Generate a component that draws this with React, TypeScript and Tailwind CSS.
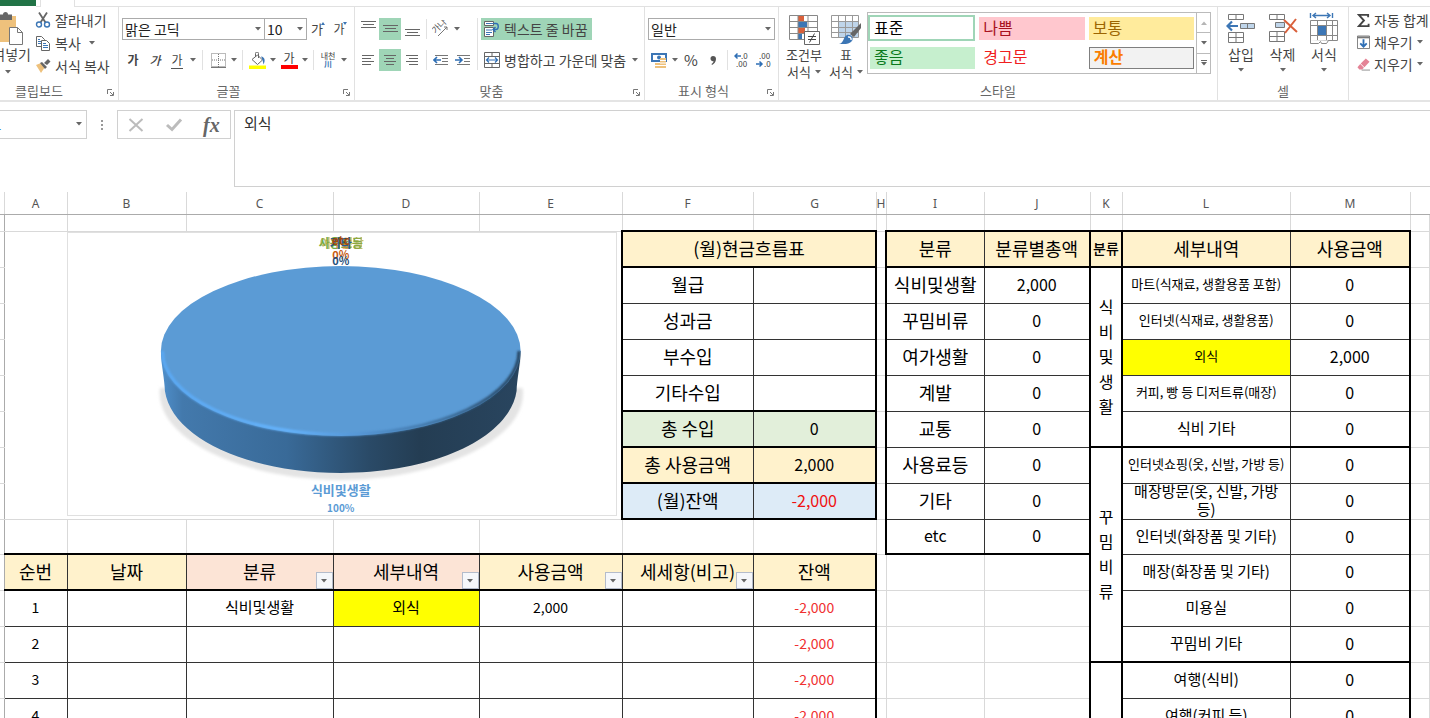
import React from "react";

const FONT = "font-['Noto_Sans_CJK_KR','Noto_Sans',sans-serif]";

const COLS = ["A", "B", "C", "D", "E", "F", "G", "H", "I", "J", "K", "L", "M"];

const CASH = [
    { name: "월급", value: "", row: "border-b border-b-[#333]" },
    { name: "성과금", value: "", row: "border-b border-b-[#333]" },
    { name: "부수입", value: "", row: "border-b border-b-[#333]" },
    { name: "기타수입", value: "", row: "border-b-2 border-b-black" },
    { name: "총 수입", value: "0", row: "border-b-2 border-b-black bg-[#e2efda]" },
    { name: "총 사용금액", value: "2,000", row: "border-b-2 border-b-black bg-[#fff2cc]" },
    { name: "(월)잔액", value: "-2,000", row: "border-b-2 border-b-black bg-[#ddebf7]" },
];

const CATEGORIES = [
    { name: "식비및생활", total: "2,000" },
    { name: "꾸밈비류", total: "0" },
    { name: "여가생활", total: "0" },
    { name: "계발", total: "0" },
    { name: "교통", total: "0" },
    { name: "사용료등", total: "0" },
    { name: "기타", total: "0" },
    { name: "etc", total: "0" },
];

const DETAILS = [
    { name: "마트(식재료, 생활용품 포함)", value: "0", text: "text-[13px]", group: "식비및생활", span: 5 },
    { name: "인터넷(식재료, 생활용품)", value: "0", text: "text-[13px]" },
    { name: "외식", value: "2,000", text: "text-[13px] bg-[#ffff00]" },
    { name: "커피, 빵 등 디저트류(매장)", value: "0", text: "text-[13px]" },
    { name: "식비 기타", value: "0", text: "text-[15px]", last: true },
    { name: "인터넷쇼핑(옷, 신발, 가방 등)", value: "0", text: "text-[13px]", group: "꾸밈비류", span: 6 },
    { name: "매장방문(옷, 신발, 가방 등)", value: "0", text: "text-[15px]" },
    { name: "인터넷(화장품 및 기타)", value: "0", text: "text-[15px]" },
    { name: "매장(화장품 및 기타)", value: "0", text: "text-[15px]" },
    { name: "미용실", value: "0", text: "text-[15px]" },
    { name: "꾸밈비 기타", value: "0", text: "text-[15px]", last: true },
    { name: "여행(식비)", value: "0", text: "text-[15px]", group: "여가생활", span: 7 },
    { name: "여행(커피 등)", value: "0", text: "text-[15px]" },
    { name: "여행(숙박)", value: "0", text: "text-[15px]" },
    { name: "여행(교통)", value: "0", text: "text-[15px]" },
    { name: "영화", value: "0", text: "text-[15px]" },
    { name: "취미", value: "0", text: "text-[15px]" },
    { name: "여가 기타", value: "0", text: "text-[15px]", last: true },
];

const LOG_HEAD = [
    { name: "순번", filter: false, bg: "bg-[#fff2cc]" },
    { name: "날짜", filter: false, bg: "bg-[#fff2cc]" },
    { name: "분류", filter: true, bg: "bg-[#fce4d6]" },
    { name: "세부내역", filter: true, bg: "bg-[#fce4d6]" },
    { name: "사용금액", filter: true, bg: "bg-[#fff2cc]" },
    { name: "세세항(비고)", filter: true, bg: "bg-[#fff2cc]" },
    { name: "잔액", filter: false, bg: "bg-[#fff2cc]" },
];

function Caret({ light = false }: { light?: boolean }) {
    return (
        <svg width="6" height="4" viewBox="0 0 6 4" className="shrink-0">
            <path d="M0 0h6L3 3.5z" fill={light ? "#b5b5b5" : "#666"} />
        </svg>
    );
}

function CaretButton({ label }: { label: string }) {
    return (
        <button aria-label={label} className="flex h-[22px] w-[10px] shrink-0 items-center justify-center">
            <Caret />
        </button>
    );
}

function Sep() {
    return <div className="h-5 w-px shrink-0 bg-[#e1e1e1]" />;
}

function Group({ label, width, launcher = false, children }: { label: string; width: string; launcher?: boolean; children: React.ReactNode }) {
    return (
        <section className={"flex h-[93px] flex-col " + width}>
            <div className="flex min-h-0 flex-1 border-r border-[#e1e1e1]">{children}</div>
            <div className="relative flex h-[19px] items-center justify-center border-r border-[#e1e1e1] text-[13px] leading-4 text-[#666]">
                {label}
                {launcher && (
                    <button aria-label={label + " 설정"} className="absolute right-1 bottom-1">
                        <svg width="7" height="7" viewBox="0 0 7 7" fill="none" stroke="#777">
                            <path d="M.5 5V.5H5M3 3l3 3M6.5 3v3.5H3" />
                        </svg>
                    </button>
                )}
            </div>
        </section>
    );
}

function Lines({ rows }: { rows: number[][] }) {
    return (
        <svg width="16" height="16" viewBox="0 0 16 16" stroke="#666">
            {rows.map((r, i) => (
                <path key={i} d={`M${r[0]} ${r[2]}H${r[1]}`} />
            ))}
        </svg>
    );
}

function IconButton({ label, on = false, children }: { label: string; on?: boolean; children: React.ReactNode }) {
    return (
        <button aria-label={label} className={"flex h-[22px] w-[22px] shrink-0 items-center justify-center text-[13px] leading-4 " + (on ? "bg-[#9fd5b7]" : "")}>
            {children}
        </button>
    );
}

function Clipboard() {
    return (
        <Group label="클립보드" width="w-[119px] shrink-0 [&>div:last-child]:pr-10" launcher>
            <button className="flex w-[31px] shrink-0 flex-col items-end overflow-hidden pt-[5px]">
                <svg width="31" height="34" viewBox="0 0 31 34" className="shrink-0">
                    <path d="M-13 4h29v26H-13z" fill="#eec17c" />
                    <path d="M-1 2.500h4a2.500 2.500 0 0 1 5 0h4V8H-1z" fill="#666" />
                    <path d="M9.500 15.500h8l5 5v12h-13z" fill="#fff" stroke="#777" />
                    <path d="M17.500 15.500v5h5" fill="none" stroke="#777" />
                </svg>
                <span className="text-[14px] leading-4 whitespace-nowrap">붙여넣기</span>
                <span className="mt-2 pr-5"><Caret /></span>
            </button>
            <div className="ml-1 flex flex-col gap-[3px] pt-[3px] text-[14px] leading-5 whitespace-nowrap">
                <button className="flex items-center gap-1">
                    <svg width="16" height="18" viewBox="0 0 16 18" fill="none">
                        <path d="M4 1.500l6.500 10M12 1.500l-6.500 10" stroke="#666" strokeWidth="1.800" />
                        <circle cx="4" cy="13.500" r="2.500" stroke="#3c76b5" strokeWidth="1.400" />
                        <circle cx="12" cy="13.500" r="2.500" stroke="#3c76b5" strokeWidth="1.400" />
                    </svg>
                    잘라내기
                </button>
                <button className="flex items-center gap-1">
                    <svg width="16" height="16" viewBox="0 0 16 16" fill="#fff" stroke="#666">
                        <path d="M1.500 1.500h5l3 3v7h-8z" />
                        <path d="M6.500 5.500h5l3 3v7h-8z" />
                        <path d="M3 4.500h2M3 6.500h3M3 8.500h3M8 8.500h3M8 10.500h5M8 12.500h5" stroke="#3c76b5" />
                    </svg>
                    복사
                    <span className="ml-1 flex"><Caret /></span>
                </button>
                <button className="flex items-center gap-1">
                    <svg width="16" height="14" viewBox="0 0 16 14">
                        <path d="M1 6l5-2 4 4-4 6z" fill="#eec17c" />
                        <path d="M5 4l2-1 5 5-2 2zM9 4l4-4 2.500 2.500L12 6z" fill="#666" />
                    </svg>
                    서식 복사
                </button>
            </div>
        </Group>
    );
}

function FontGroup() {
    return (
        <Group label="글꼴" width="w-[236px] shrink-0 [&>div:last-child]:pr-4" launcher>
            <div className="flex flex-col gap-[9px] pt-[11px] pl-[3px]">
                <div className="flex items-center">
                    <div className="relative">
                        <select aria-label="글꼴" className="block h-[22px] w-[143px] appearance-none border border-[#ababab] bg-white px-0.5 pb-0.5 text-[14px] leading-5 text-[#222]">
                            <option>맑은 고딕</option>
                        </select>
                        <span className="pointer-events-none absolute top-[9px] right-1 flex"><Caret /></span>
                    </div>
                    <div className="relative -ml-px">
                        <select aria-label="글꼴 크기" className="block h-[22px] w-[43px] appearance-none border border-[#ababab] bg-white px-0.5 pb-0.5 text-[14px] leading-5 text-[#222]">
                            <option>10</option>
                        </select>
                        <span className="pointer-events-none absolute top-[9px] right-1 flex"><Caret /></span>
                    </div>
                    <IconButton label="글꼴 크기 크게">
                        가
                        <svg width="4" height="3" viewBox="0 0 4 3" className="mt-1 -ml-0.5 self-start"><path d="M0 3h4L2 0z" fill="#3c76b5" /></svg>
                    </IconButton>
                    <IconButton label="글꼴 크기 작게">
                        <span className="text-[12px]">가</span>
                        <svg width="4" height="3" viewBox="0 0 4 3" className="mt-1 -ml-0.5 self-start"><path d="M0 0h4L2 3z" fill="#3c76b5" /></svg>
                    </IconButton>
                </div>
                <div className="flex items-center">
                    <IconButton label="굵게"><span className="text-[12px] font-bold">가</span></IconButton>
                    <IconButton label="기울임꼴"><span className="text-[12px] font-medium italic">가</span></IconButton>
                    <IconButton label="밑줄"><span className="border-b border-[#555] text-[12px]">가</span></IconButton>
                    <CaretButton label="밑줄 종류" />
                    <div className="mx-1"><Sep /></div>
                    <IconButton label="테두리">
                        <svg width="15" height="15" viewBox="0 0 15 15" stroke="#777" fill="none">
                            <path d="M.5.5h14v13H.5zM7.500 1v13M1 7h13" strokeDasharray="1 1" />
                            <path d="M0 14.500h15" />
                        </svg>
                    </IconButton>
                    <CaretButton label="테두리 종류" />
                    <div className="mx-[3px]"><Sep /></div>
                    <IconButton label="채우기 색">
                        <svg width="17" height="17" viewBox="0 0 17 17" fill="none">
                            <path d="M3 7.500L8.500 3l5 5-5 4.500z" fill="#fff" stroke="#666" />
                            <path d="M6.500 5V1.500a1.500 1.500 0 0 1 3 0V6" stroke="#666" />
                            <path d="M12 4.500c4 .5 4.500 4 2.500 8-.5-3-1-5-2.500-8z" fill="#3c76b5" />
                            <path d="M0 13.500h17V17H0z" fill="#ff0" />
                        </svg>
                    </IconButton>
                    <CaretButton label="채우기 색 선택" />
                    <IconButton label="글꼴 색">
                        <span className="w-[17px] border-b-4 border-[#ff0000] text-[12px] leading-[14px]">가</span>
                    </IconButton>
                    <CaretButton label="글꼴 색 선택" />
                    <div className="mx-[3px]"><Sep /></div>
                    <IconButton label="윗주 필드 표시">
                        <span className="flex flex-col items-center text-[8px] leading-[8px]">
                            <span>내천</span>
                            <span className="font-bold text-[#3c76b5]">川</span>
                        </span>
                    </IconButton>
                    <CaretButton label="윗주 옵션" />
                </div>
            </div>
        </Group>
    );
}

function AlignGroup() {
    return (
        <Group label="맞춤" width="w-[290px] shrink-0 [&>div:last-child]:pr-4" launcher>
            <div className="flex pt-[11px] pl-[2px]">
                <div className="flex flex-col gap-[9px]">
                    <div className="flex items-center">
                        <IconButton label="위쪽 맞춤"><Lines rows={[[1, 16, 0.5], [3, 14, 3.5], [1, 16, 6.5]]} /></IconButton>
                        <IconButton label="가운데 맞춤" on><Lines rows={[[1, 16, 4.5], [3, 14, 7.5], [1, 16, 10.5]]} /></IconButton>
                        <IconButton label="아래쪽 맞춤"><Lines rows={[[1, 16, 8.5], [3, 14, 11.5], [1, 16, 14.5]]} /></IconButton>
                        <div className="mx-[3px]"><Sep /></div>
                        <IconButton label="방향">
                            <svg width="18" height="18" viewBox="0 0 18 18">
                                <text x="0" y="10" fontSize="9" fill="#555" transform="rotate(-45 7 8)">가나</text>
                                <path d="M6 16l9-9M15 7v3M15 7h-3" stroke="#777" fill="none" />
                            </svg>
                        </IconButton>
                        <CaretButton label="방향 선택" />
                    </div>
                    <div className="flex items-center">
                        <IconButton label="왼쪽 맞춤"><Lines rows={[[2, 14, 3.5], [2, 11, 6.5], [2, 14, 9.5], [2, 11, 12.5]]} /></IconButton>
                        <IconButton label="가로 가운데" on><Lines rows={[[2, 14, 3.5], [4, 12, 6.5], [2, 14, 9.5], [4, 12, 12.5]]} /></IconButton>
                        <IconButton label="오른쪽 맞춤"><Lines rows={[[2, 14, 3.5], [5, 14, 6.5], [2, 14, 9.5], [5, 14, 12.5]]} /></IconButton>
                        <div className="mx-[3px]"><Sep /></div>
                        <IconButton label="내어쓰기">
                            <svg width="16" height="12" viewBox="0 0 16 12" fill="none">
                                <path d="M2 1.500h13M9 4.500h6M9 7.500h6M2 10.500h13" stroke="#777" />
                                <path d="M1 6h7M4 3L1 6l3 3" stroke="#2f6fb5" strokeWidth="1.600" />
                            </svg>
                        </IconButton>
                        <IconButton label="들여쓰기">
                            <svg width="16" height="12" viewBox="0 0 16 12" fill="none">
                                <path d="M2 1.500h13M9 4.500h6M9 7.500h6M2 10.500h13" stroke="#777" />
                                <path d="M0 6h7M4 3l3 3-3 3" stroke="#2f6fb5" strokeWidth="1.600" />
                            </svg>
                        </IconButton>
                    </div>
                </div>
                <div className="mx-[3px] h-[52px] w-px bg-[#e1e1e1]" />
                <div className="flex flex-col items-start gap-[9px] text-[14px] leading-[18px] whitespace-nowrap">
                    <button className="flex h-[22px] items-center gap-1 bg-[#9fd5b7] pr-1 pl-[3px]">
                        <svg width="16" height="17" viewBox="0 0 16 17" fill="none">
                            <path d="M.5.5h9v4h-9zM.5 6.500h9v9h-9z" fill="#fff" stroke="#666" />
                            <path d="M2 2.500h8M2 9h6M2 11.500h6M2 13.500h4" stroke="#3c76b5" />
                            <path d="M10 2.500h2c3 0 3 6 0 6H9M11.500 6L9 8.500l2.500 2.500" stroke="#2f6fb5" strokeWidth="1.400" />
                        </svg>
                        텍스트 줄 바꿈
                    </button>
                    <div className="flex items-center">
                        <button className="flex h-[22px] items-center gap-1 pl-[3px]">
                            <svg width="16" height="16" viewBox="0 0 16 16" fill="none">
                                <path d="M.5.5h15v15H.5zM.5 4.500h15M.5 11.500h15M8 .5v4M8 11.500v4" stroke="#666" />
                                <path d="M2 8h12M5 5.500L2.500 8 5 10.500M11 5.500L13.500 8 11 10.500" stroke="#2f6fb5" strokeWidth="1.200" />
                            </svg>
                            병합하고 가운데 맞춤
                        </button>
                        <span className="ml-1 flex"><CaretButton label="병합 옵션" /></span>
                    </div>
                </div>
            </div>
        </Group>
    );
}

function NumberGroup() {
    return (
        <Group label="표시 형식" width="w-[134px] shrink-0 [&>div:last-child]:pr-4" launcher>
            <div className="flex flex-col gap-[9px] pt-[11px] pl-[3px]">
                <div className="relative">
                    <select aria-label="표시 형식" className="block h-[22px] w-[127px] appearance-none border border-[#ababab] bg-white px-0.5 pb-0.5 text-[14px] leading-5 text-[#222]">
                        <option>일반</option>
                    </select>
                    <span className="pointer-events-none absolute top-[9px] right-1 flex"><Caret /></span>
                </div>
                <div className="flex items-center">
                    <IconButton label="회계 표시 형식">
                        <svg width="17" height="17" viewBox="0 0 17 17">
                            <path d="M0 1h16v9H0z" fill="#3c76b5" />
                            <path d="M2 3h12v5H2z" fill="#fff" />
                            <circle cx="8" cy="5.500" r="2" fill="#3c76b5" />
                            <path d="M9 6h6v10H9zM4 11h6v5H4z" fill="#eec17c" />
                            <path d="M9 8.500h6M9 11h6M4 13.500h11" stroke="#fff" />
                        </svg>
                    </IconButton>
                    <CaretButton label="통화 선택" />
                    <IconButton label="백분율"><span className="text-[15px]">%</span></IconButton>
                    <IconButton label="쉼표 스타일">
                        <svg width="6" height="9" viewBox="0 0 6 9"><path d="M3 0c2 0 3 1.200 3 3 0 3-2 5-4 6l-.5-1C3 7 3.500 6 3.500 5.200 1.500 5.500.5 4 .5 2.600.5 1 1.500 0 3 0z" fill="#555" /></svg>
                    </IconButton>
                    <div className="mx-[3px]"><Sep /></div>
                    <IconButton label="자릿수 늘림">
                        <svg width="16" height="16" viewBox="0 0 16 16" fontSize="8" fill="#444">
                            <text x="7" y="7">.0</text>
                            <text x="2" y="15">.00</text>
                            <path d="M1 4h6M3.500 1.500L1 4l2.500 2.500" fill="none" stroke="#2f6fb5" strokeWidth="1.500" />
                        </svg>
                    </IconButton>
                    <IconButton label="자릿수 줄임">
                        <svg width="16" height="16" viewBox="0 0 16 16" fontSize="8" fill="#444">
                            <text x="3" y="7">.00</text>
                            <text x="8" y="15">.0</text>
                            <path d="M0 12h6M3.500 9.500L6 12l-2.500 2.500" fill="none" stroke="#2f6fb5" strokeWidth="1.500" />
                        </svg>
                    </IconButton>
                </div>
            </div>
        </Group>
    );
}

function StyleGroup() {
    return (
        <Group label="스타일" width="w-[439px] shrink-0">
            <div className="flex pl-1 text-[13px] leading-4">
                <button className="flex w-[42px] flex-col items-center pt-[7px]">
                    <svg width="32" height="31" viewBox="0 0 32 31">
                        <path d="M1.500 1.500h28v24h-28z" fill="#fff" />
                        <path d="M10 2h6v5h-6zM10 14h7v5h-7z" fill="#d9603b" />
                        <path d="M10 8h9v5h-9zM10 20h4v5h-4z" fill="#3c76b5" />
                        <path d="M1.500 1.500h28v24h-28zM1.500 7.500h28M1.500 13.500h28M1.500 19.500h28M10 1.500v24M20 1.500v24" fill="none" stroke="#888" />
                        <path d="M16.500 17.500h15v13h-15z" fill="#fff" stroke="#666" />
                        <path d="M20 22.500h8M20 25.500h8M26.500 19.500l-5 9" stroke="#444" />
                    </svg>
                    <span className="mt-0.5">조건부</span>
                    <span className="mt-px flex items-center gap-1 whitespace-nowrap">서식 <Caret /></span>
                </button>
                <button className="flex w-[42px] flex-col items-center pt-[7px]">
                    <svg width="32" height="31" viewBox="0 0 32 31">
                        <path d="M1.500 1.500h27v22h-27z" fill="#fff" />
                        <path d="M8 7h20v17H8z" fill="#bfd5ea" />
                        <path d="M1.500 1.500h27v22h-27zM1.500 7.500h27M1.500 13.500h27M1.500 18.500h27M8.500 1.500v22M15.500 1.500v22M22.500 1.500v22" fill="none" stroke="#999" />
                        <path d="M31 9v5l-7 9-4-3z" fill="#666" />
                        <path d="M9 30c5-1 4-7 8-9 4-1 7 3 5 6-3 4-9 3-13 3z" fill="#3c76b5" />
                        <path d="M18 23c2-.5 3.500 1 3 3" stroke="#fff" fill="none" strokeWidth="1.500" />
                    </svg>
                    <span className="mt-0.5">표</span>
                    <span className="mt-px flex items-center gap-1 whitespace-nowrap">서식 <Caret /></span>
                </button>
                <div className="mt-[5px] flex h-[62px] w-[344px] border border-[#bbb] bg-white text-[16px] leading-[16px]">
                    <div className="grid flex-1 grid-cols-3 gap-x-1 gap-y-1 p-[2px] text-left">
                        <button className="-ml-0.5 h-[26px] border-2 border-[#9fd5b7] px-1 pb-0.5 text-left text-black">표준</button>
                        <button className="mt-0.5 h-[23px] bg-[#ffc7ce] px-1 pb-1 text-left text-[#a8121f]">나쁨</button>
                        <button className="mt-0.5 h-[23px] bg-[#ffeb9c] px-1 pb-1 text-left text-[#9c6500]">보통</button>
                        <button className="h-[22px] bg-[#c6efce] px-1 pb-1 text-left text-[#0a7a1c]">좋음</button>
                        <button className="h-[22px] px-1 pb-1 text-left text-[#f02020]">경고문</button>
                        <button className="h-[22px] border border-[#7f7f7f] bg-[#f2f2f2] px-1 pb-1 text-left font-bold text-[#fa7d00]">계산</button>
                    </div>
                    <div className="flex w-[14px] flex-col divide-y divide-[#bbb] border-l border-[#bbb]">
                        <button aria-label="위로" className="flex flex-1 items-center justify-center"><span className="flex rotate-180"><Caret light /></span></button>
                        <button aria-label="아래로" className="flex flex-1 items-center justify-center"><Caret /></button>
                        <button aria-label="자세히" className="flex flex-1 flex-col items-center justify-center gap-px">
                            <span className="h-px w-1.5 bg-[#666]" />
                            <Caret />
                        </button>
                    </div>
                </div>
            </div>
        </Group>
    );
}

function CellsGroup() {
    return (
        <Group label="셀" width="w-[131px] shrink-0">
            <div className="flex pl-[2px] text-[14px] leading-5">
                <button className="flex w-[42px] flex-col items-center pt-[5px]">
                    <svg width="30" height="32" viewBox="0 0 30 32" fill="#fff" stroke="#777">
                        <path d="M2.500 2.500h15v5h-15zM10 2.500v5M2.500 20.500h15v10h-15zM10 20.500v10M2.500 25.500h15" />
                        <path d="M14.500 11.500h14v5h-14zM21.500 11.500v5" fill="#bfd5ea" />
                        <path d="M1 14h11M6 9.500L1.500 14 6 18.500" fill="none" stroke="#3c76b5" strokeWidth="2.200" />
                    </svg>
                    <span>삽입</span>
                    <span className="mt-1 flex"><Caret /></span>
                </button>
                <button className="flex w-[41px] flex-col items-center pt-[5px]">
                    <svg width="30" height="32" viewBox="0 0 30 32" fill="#fff" stroke="#777">
                        <path d="M1.500 2.500h15v5h-15zM9 2.500v5M1.500 19.500h15v10h-15zM9 19.500v10M1.500 24.500h15" />
                        <path d="M7.500 10.500h9v5h-9z" fill="#bfd5ea" />
                        <path d="M16 8l13 12M28 7L17 21" fill="none" stroke="#d9603b" strokeWidth="2" />
                    </svg>
                    <span>삭제</span>
                    <span className="mt-1 flex"><Caret /></span>
                </button>
                <button className="flex w-[42px] flex-col items-center pt-[5px]">
                    <svg width="30" height="32" viewBox="0 0 30 32" fill="#fff" stroke="#888">
                        <path d="M1.500 8.500h27v20h-27zM1.500 13.500h27M1.500 23.500h27M8.500 8.500v20M17.500 8.500v20M23.500 8.500v20" />
                        <path d="M1.500 28v3.500h8l2-2 1 2h5l2-3" />
                        <path d="M9 14h8v9H9z" fill="#3c76b5" stroke="none" />
                        <path d="M1.500 1v5M23.500 1v5M4 3.500h17M7 1L4 3.500 7 6M18 1l3 2.500L18 6" fill="none" stroke="#3c76b5" strokeWidth="1.400" />
                    </svg>
                    <span>서식</span>
                    <span className="mt-1 flex"><Caret /></span>
                </button>
            </div>
        </Group>
    );
}

function EditGroup() {
    return (
        <div className="flex min-w-0 flex-1 flex-col gap-[2px] overflow-hidden pt-[3px] pl-2 text-[14px] leading-5 whitespace-nowrap">
            <button className="flex items-center gap-1">
                <svg width="13" height="15" viewBox="0 0 14 15" className="shrink-0" fill="none" stroke="#444" strokeWidth="2">
                    <path d="M12 4V1.500H2L7.500 7.500 2 13.500h10.500V11" />
                </svg>
                자동 합계
            </button>
            <button className="flex items-center gap-1">
                <svg width="13" height="15" viewBox="0 0 14 15" className="shrink-0" fill="none">
                    <path d="M.5.5h13v13.500H.5z" stroke="#777" />
                    <path d="M.5 2h13" stroke="#777" strokeWidth="2" />
                    <path d="M7 4v8M3.500 8.500L7 12l3.500-3.500" stroke="#2f6fb5" strokeWidth="2" />
                </svg>
                채우기
                <Caret />
            </button>
            <button className="flex items-center gap-1">
                <svg width="13" height="15" viewBox="0 0 14 15" className="shrink-0">
                    <path d="M9.500 1L13.500 4.500 8 10.500 4 6.500z" fill="#e48396" />
                    <path d="M3.500 7L7.500 11 5.500 13H2.500L.5 10.500z" fill="#e48396" />
                    <path d="M5 13.500h9" stroke="#888" />
                </svg>
                지우기
                <Caret />
            </button>
        </div>
    );
}

function FormulaBar() {
    return (
        <div className="flex h-[85px] items-start pt-2">
            <div className="relative">
                <input aria-label="이름 상자" defaultValue="D11" className="block h-[29px] w-[87px] border border-l-0 border-[#d0d0d0] -indent-[22px] text-[13px] text-[#2b7cd3]" />
                <span className="pointer-events-none absolute top-3 right-[5px] flex"><Caret /></span>
            </div>
            <div className="flex h-[29px] w-[30px] flex-col items-center justify-center gap-[2px]">
                <span className="h-0.5 w-0.5 bg-[#999]" />
                <span className="h-0.5 w-0.5 bg-[#999]" />
                <span className="h-0.5 w-0.5 bg-[#999]" />
            </div>
            <div className="flex h-[29px] w-[114px] items-center justify-around border border-[#d0d0d0]">
                <button aria-label="취소">
                    <svg width="16" height="14" viewBox="0 0 16 14" fill="none" stroke="#bcbcbc" strokeWidth="2"><path d="M1.500 1l13 12M14.500 1l-13 12" /></svg>
                </button>
                <button aria-label="입력">
                    <svg width="18" height="14" viewBox="0 0 18 14" fill="none" stroke="#bcbcbc" strokeWidth="3"><path d="M2 7l5 4.500L16 1.500" /></svg>
                </button>
                <button aria-label="함수 삽입" className="font-['Liberation_Serif',serif] text-[20px] leading-6 font-bold text-[#666] italic">fx</button>
            </div>
            <textarea aria-label="수식 입력줄" defaultValue="외식" className="ml-[3px] h-[77px] min-w-0 flex-1 resize-none border border-r-0 border-[#d0d0d0] px-[9px] py-0 text-[15px] leading-6 text-[#333]" />
        </div>
    );
}

function Chart() {
    return (
        <div className="mr-1 ml-[62px] border border-[#e0e0e0] bg-white">
            <svg viewBox="0 0 549 282" className="block h-[282px] w-full" textAnchor="middle" fontWeight="bold">
                <defs>
                    <linearGradient id="side">
                        <stop offset="0" stopColor="#4f8fcb" />
                        <stop offset="0.06" stopColor="#4379ac" />
                        <stop offset="0.35" stopColor="#396a98" />
                        <stop offset="0.58" stopColor="#2a4a67" />
                        <stop offset="0.72" stopColor="#243d53" />
                        <stop offset="1" stopColor="#29455f" />
                    </linearGradient>
                    <linearGradient id="rim">
                        <stop offset="0" stopColor="#5aa9f5" />
                        <stop offset="0.35" stopColor="#66b5ff" />
                        <stop offset="0.55" stopColor="#5596d6" />
                        <stop offset="0.8" stopColor="#3a6a96" />
                        <stop offset="1" stopColor="#24415c" />
                    </linearGradient>
                    <filter id="shadow" x="-10%" y="-10%" width="120%" height="120%">
                        <feGaussianBlur stdDeviation="1.5" />
                    </filter>
                    <filter id="soft" x="-10%" y="-10%" width="120%" height="120%">
                        <feGaussianBlur stdDeviation="0.8" />
                    </filter>
                    <clipPath id="front">
                        <path d="M93 112H453V220H93z" />
                    </clipPath>
                </defs>
                <path d="M92 155C86 208 180 247 273 247S462 208 455 155z" fill="#e4e4e4" filter="url(#shadow)" />
                <path d="M93 118C93 130 97 148 97 158C104 205 180 240 273 240S442 205 449 158C449 148 453 130 453 118z" fill="url(#side)" />
                <ellipse cx="273" cy="118" rx="180" ry="85" fill="#5b9bd5" />
                <g clipPath="url(#front)">
                    <path d="M94.500 118A178.500 83.500 0 0 0 451.500 118" fill="none" stroke="url(#rim)" strokeWidth="3" filter="url(#soft)" />
                </g>
                <g fontSize="12">
                    <text x="273" y="15" fill="#70ad47">사용료등</text>
                    <text x="274" y="15" fill="#a5a53a" opacity="0.7">여가생활</text>
                    <text x="273" y="15" fill="#ed7d31" opacity="0.6">계발</text>
                    <text x="273" y="15" fill="#255e91">기타</text>
                    <text x="273" y="12" fill="#9e480e">etc</text>
                </g>
                <g fontSize="11">
                    <text x="273" y="26" fill="#c55a11">0%</text>
                    <text x="273" y="32" fill="#1f4e79">0%</text>
                </g>
                <text x="273" y="262" fontSize="13" fill="#5b9bd5">식비및생활</text>
                <text x="273" y="279" fontSize="10" fill="#5b9bd5">100%</text>
            </svg>
        </div>
    );
}

// one blank cell with the default grey gridlines
function Blank({ className = "border-r-[#d9d9d9]" }: { className?: string }) {
    return <td className={"border-r border-b border-b-[#d9d9d9] " + className} />;
}

function CashCells({ index }: { index: number }) {
    if (index === 0) {
        return <th colSpan={2} className="border-2 border-black bg-[#fff2cc] text-[18px] font-normal">(월)현금흐름표</th>;
    }
    const c = CASH[index - 1];
    return (
        <>
            <td className={"border-r border-l-2 border-r-[#333] border-l-black text-[18px] " + c.row}>{c.name}</td>
            <td className={"border-r-2 border-r-black " + c.row + (c.value.startsWith("-") ? " text-[#f01010]" : "")}>{c.value}</td>
        </>
    );
}

function LogCells({ index }: { index: number }) {
    if (index === 0) {
        return (
            <>
                {LOG_HEAD.map((h, i) => (
                    <th key={h.name} className={"relative border-y-2 border-y-black text-[18px] font-normal " + h.bg + (i === 6 ? " border-r-2 border-r-black" : " border-r border-r-[#333]")}>
                        {h.name}
                        {h.filter && (
                            <button aria-label={h.name + " 필터"} className="absolute right-0 bottom-0 flex h-[17px] w-[17px] items-center justify-center border border-[#b4bccb] bg-[#f5f7fa]">
                                <Caret />
                            </button>
                        )}
                    </th>
                ))}
            </>
        );
    }
    const first = index === 1;
    const cell = "border-r border-b border-[#333] ";
    return (
        <>
            <td className={cell + "text-[14px]"}>{index}</td>
            <td className={cell} />
            <td className={cell + "text-[15px]"}>{first && "식비및생활"}</td>
            <td className={cell + "text-[15px]" + (first ? " bg-[#ffff00]" : "")}>{first && "외식"}</td>
            <td className={cell + "text-[14px]"}>{first && "2,000"}</td>
            <td className={cell} />
            <td className="border-r-2 border-b border-r-black border-b-[#333] text-[14px] text-[#f03030]">-2,000</td>
        </>
    );
}

function CategoryCells({ index }: { index: number }) {
    if (index === 0) {
        return (
            <>
                <th className="border-y-2 border-r border-l-2 border-black border-r-[#333] bg-[#fff2cc] text-[18px] font-normal">분류</th>
                <th className="border-y-2 border-black bg-[#fff2cc] text-[18px] font-normal">분류별총액</th>
            </>
        );
    }
    const c = CATEGORIES[index - 1];
    if (!c) {
        return (
            <>
                <Blank />
                <Blank />
            </>
        );
    }
    const bottom = index === CATEGORIES.length ? "border-b-2 border-b-black " : "border-b border-b-[#333] ";
    return (
        <>
            <td className={bottom + "border-r border-l-2 border-r-[#333] border-l-black whitespace-nowrap " + (c.name === "etc" ? "text-[16px]" : "text-[18px]")}>{c.name}</td>
            <td className={bottom}>{c.total}</td>
        </>
    );
}

function DetailCells({ index }: { index: number }) {
    if (index === 0) {
        return (
            <>
                <th className="border-2 border-black bg-[#fff2cc] text-[14px] font-medium whitespace-nowrap">분류</th>
                <th className="border-y-2 border-r border-black border-r-[#333] bg-[#fff2cc] text-[18px] font-normal">세부내역</th>
                <th className="border-y-2 border-r-2 border-black bg-[#fff2cc] text-[18px] font-normal">사용금액</th>
            </>
        );
    }
    const d = DETAILS[index - 1];
    const bottom = d.last ? "border-b-2 border-b-black " : "border-b border-b-[#333] ";
    return (
        <>
            {d.group && (
                <td rowSpan={d.span} className="border-2 border-black leading-[25px]">
                    {d.group.split("").map((ch) => (
                        <div key={ch}>{ch}</div>
                    ))}
                </td>
            )}
            <td className={bottom + "border-r border-r-[#333] px-1 leading-[18px] " + d.text}>
                <div className="-my-1 flex h-[36px] items-center justify-center">{d.name}</div>
            </td>
            <td className={bottom + "border-r-2 border-r-black"}>{d.value}</td>
        </>
    );
}

function Sheet() {
    return (
        <table className="w-full table-fixed border-collapse text-center text-[16px] leading-6 text-black [&_tbody_td]:pb-[2px] [&_tbody_th]:pb-[2px]">
            <colgroup>
                <col className="w-[4px]" />
                <col className="w-[63px]" />
                <col className="w-[119px]" />
                <col className="w-[147px]" />
                <col className="w-[146px]" />
                <col className="w-[143px]" />
                <col className="w-[131px]" />
                <col className="w-[123px]" />
                <col className="w-[10px]" />
                <col className="w-[98px]" />
                <col className="w-[106px]" />
                <col className="w-[32px]" />
                <col className="w-[168px]" />
                <col className="w-[120px]" />
                <col />
            </colgroup>
            <thead>
                <tr className="h-[22px] font-['Noto_Sans',sans-serif] text-[12px] leading-4 text-[#555]">
                    <td className="border-r border-b border-r-[#d9d9d9] border-b-[#ababab]" />
                    {COLS.map((c) => (
                        <th key={c} scope="col" className="border-r border-b border-r-[#d9d9d9] border-b-[#ababab] pt-[2px] font-normal">
                            {c}
                        </th>
                    ))}
                    <td className="border-b border-b-[#ababab]" />
                </tr>
            </thead>
            <tbody>
                <tr className="h-[17px]">
                    <Blank className="border-r-[#ababab]" />
                    {COLS.map((c) => (
                        <Blank key={c} />
                    ))}
                    <Blank />
                </tr>
                {Array.from({ length: 19 }, (_, i) => (
                    <tr key={i} className={i === 8 ? "h-[35px]" : "h-[36px]"}>
                        <Blank className="border-r-[#ababab]" />
                        {i === 0 && (
                            <td colSpan={5} rowSpan={8} className="border-b border-[#d9d9d9]">
                                <Chart />
                            </td>
                        )}
                        {i < 8 && <CashCells index={i} />}
                        {i === 8 && COLS.slice(0, 7).map((c) => <Blank key={c} />)}
                        {i > 8 && <LogCells index={i - 9} />}
                        <Blank />
                        <CategoryCells index={i} />
                        <DetailCells index={i} />
                        <Blank />
                    </tr>
                ))}
            </tbody>
        </table>
    );
}

export default function App() {
    return (
        <div className={"flex h-screen flex-col overflow-hidden bg-white text-[#444] " + FONT}>
            <div className="flex h-[7px] shrink-0">
                <div className="h-[6px] w-[36px] bg-[#217346]" />
                <div className="w-[5px] border-r border-b border-[#e1e1e1]" />
                <div className="w-[34px] border-r border-[#e1e1e1]" />
                <div className="flex-1 border-b border-[#e1e1e1]" />
            </div>
            <header className="flex shrink-0 overflow-hidden border-b-2 border-[#e4e4e4]">
                <Clipboard />
                <FontGroup />
                <AlignGroup />
                <NumberGroup />
                <StyleGroup />
                <CellsGroup />
                <EditGroup />
            </header>
            <FormulaBar />
            <main className="min-h-0 flex-1 overflow-hidden pt-[5px]">
                <Sheet />
            </main>
        </div>
    );
}
